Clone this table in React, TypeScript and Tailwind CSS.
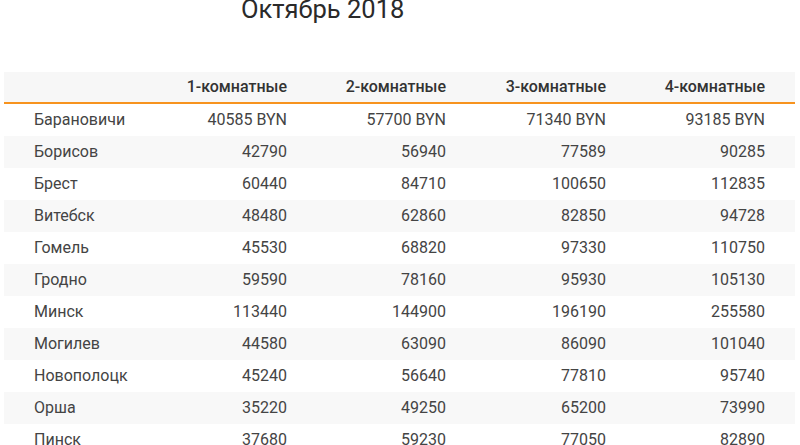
import React from "react";

const rows: [string, string, string, string, string][] = [
  ["Барановичи", "40585 BYN", "57700 BYN", "71340 BYN", "93185 BYN"],
  ["Борисов", "42790", "56940", "77589", "90285"],
  ["Брест", "60440", "84710", "100650", "112835"],
  ["Витебск", "48480", "62860", "82850", "94728"],
  ["Гомель", "45530", "68820", "97330", "110750"],
  ["Гродно", "59590", "78160", "95930", "105130"],
  ["Минск", "113440", "144900", "196190", "255580"],
  ["Могилев", "44580", "63090", "86090", "101040"],
  ["Новополоцк", "45240", "56640", "77810", "95740"],
  ["Орша", "35220", "49250", "65200", "73990"],
  ["Пинск", "37680", "59230", "77050", "82890"],
];

const headers = ["1-комнатные", "2-комнатные", "3-комнатные", "4-комнатные"];

const gridCols = "grid grid-cols-[154px_159px_159px_160px_159px]";

const App = () => {
  return (
    <div className="h-[445px] w-[800px] overflow-hidden bg-white font-['Roboto','Liberation_Sans',sans-serif]">
      {/* Title */}
      <div className="-mt-[3px] h-[75px] pl-[241px] text-[25.5px] leading-[25px] text-[#2a2a2a]">
        Октябрь 2018
      </div>
      <div className="mx-[4px] w-[791px]">
        {/* Header */}
        <div
          className={`${gridCols} h-[32px] border-b-2 border-[#f7931e] bg-[#f7f7f7] text-[16px] font-medium text-[#333333]`}
        >
          <div />
          {headers.map((h) => (
            <div key={h} className="flex items-center justify-end pr-[30px]">
              {h}
            </div>
          ))}
        </div>
        {rows.map((r, i) => (
          <div
            key={r[0]}
            className={`${gridCols} h-[32px] text-[16px] text-[#444444] ${
              i % 2 === 1 ? "bg-[#f8f8f8]" : "bg-white"
            }`}
          >
            <div className="flex items-center pl-[30px]">{r[0]}</div>
            {r.slice(1).map((v, j) => (
              <div key={j} className="flex items-center justify-end pr-[30px]">
                {v}
              </div>
            ))}
          </div>
        ))}
      </div>
    </div>
  );
};

export default App;
